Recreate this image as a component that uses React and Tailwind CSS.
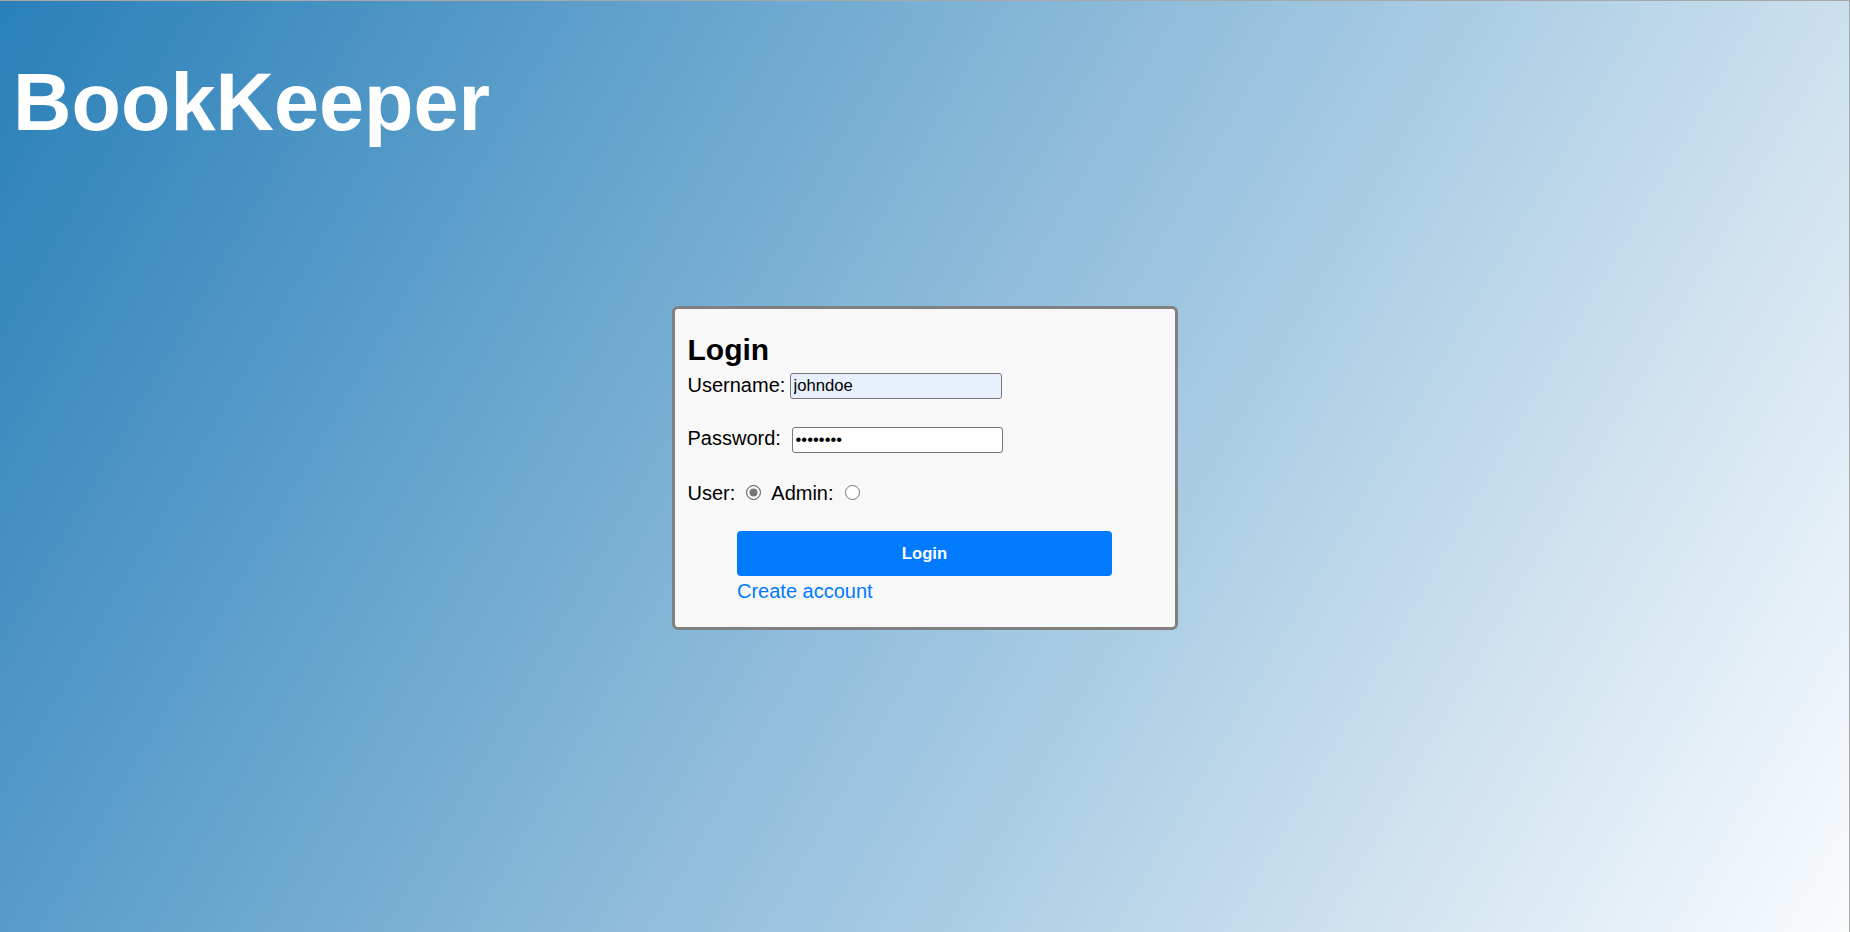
import React from 'react'

export default function App() {
  return (
    <div className="min-h-screen border-t border-r border-[#a8a8a8] bg-[linear-gradient(120deg,#2980b9,#fafcfe)] font-['Liberation_Sans',Arial,sans-serif] text-black">
      <h1 className="pt-[55px] pl-[13px] text-[81px] font-bold leading-[92px] text-white">BookKeeper</h1>

      <div className="mx-auto mt-[158px] w-[506px] rounded-[6px] border-[3px] border-[#808080] bg-[#f8f8f8] px-[13px] pt-[24px] pb-[24px]">
        <h2 className="mb-[6px] text-[30px] font-bold leading-[34px]">Login</h2>

        <div className="flex items-center text-[20px] leading-[23px]">
          <label className="mb-[2px] w-[102px]">Username:</label>
          <input
            type="text"
            defaultValue="johndoe"
            className="h-[26px] w-[212px] rounded-[3px] border border-[#767676] bg-[#e8f0fe] pl-[3px] text-[16.67px] outline-none"
          />
        </div>

        <div className="mt-[28px] flex items-center text-[20px] leading-[23px]">
          <label className="mb-[3px] w-[104px]">Password:</label>
          <input
            type="password"
            defaultValue="password"
            className="h-[26px] w-[211px] rounded-[3px] border border-[#767676] bg-white pl-[3px] text-[16.67px] outline-none"
          />
        </div>

        <div className="mt-[29px] flex items-center text-[20px] leading-[23px]">
          <label>User:</label>
          <input
            type="radio"
            name="role"
            defaultChecked
            className="ml-[11px] mt-[-3px] h-[15px] w-[15px] appearance-none rounded-full border border-[#767676] bg-white checked:border-[#6a6a6a] checked:bg-[#777777] checked:shadow-[inset_0_0_0_2.5px_#fff]"
          />
          <label className="ml-[10px]">Admin:</label>
          <input
            type="radio"
            name="role"
            className="ml-[11px] mt-[-3px] h-[15px] w-[15px] appearance-none rounded-full border border-[#767676] bg-white"
          />
        </div>

        <div className="mx-auto mt-[26px] w-[375px]">
          <button className="h-[45px] w-full rounded-[4px] bg-[#007bff] text-[16.67px] font-bold text-white">
            Login
          </button>
          <a href="#" className="mt-[4px] block text-[20px] leading-[23px] text-[#007bff]">
            Create account
          </a>
        </div>
      </div>
    </div>
  )
}
